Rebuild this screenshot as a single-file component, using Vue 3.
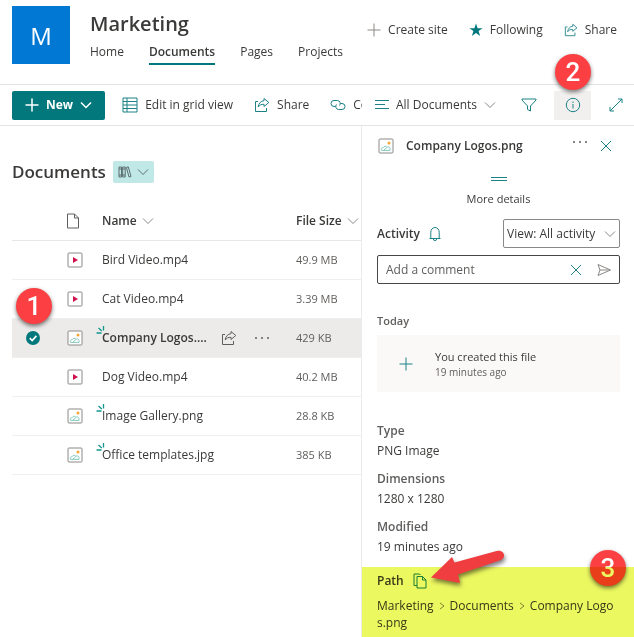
<script setup>
import { ref } from 'vue'

const nav = ['Home', 'Documents', 'Pages', 'Projects']
const files = [
  { name: 'Bird Video.mp4', kind: 'video', size: '49.9 MB' },
  { name: 'Cat Video.mp4', kind: 'video', size: '3.39 MB' },
  { name: 'Company Logos.png', short: 'Company Logos....', kind: 'picture', size: '429 KB', fresh: true, selected: true },
  { name: 'Dog Video.mp4', kind: 'video', size: '40.2 MB' },
  { name: 'Image Gallery.png', kind: 'picture', size: '28.8 KB', fresh: true },
  { name: 'Office templates.jpg', kind: 'picture', size: '385 KB', fresh: true },
]
const facts = [
  { label: 'Type', value: 'PNG Image' },
  { label: 'Dimensions', value: '1280 x 1280' },
  { label: 'Modified', value: '19 minutes ago' },
]
const comment = ref('')
</script>

<template>
  <div class="page">
    <svg class="defs" aria-hidden="true">
      <symbol id="share" viewBox="0 0 16 16">
        <path d="M4 4.500H1.500V14.500H12.500V11M10 1.500L14.800 5.500L10 9.500V7.300C7.200 7.200 5.600 8 4.200 10C4.600 6.400 6.800 4 10 3.700Z" />
      </symbol>
      <symbol id="chevron" viewBox="0 0 12 12"><path d="M1 3.5L6 8.5L11 3.5" /></symbol>
      <symbol id="plus" viewBox="0 0 14 14"><path d="M7 0.5V13.5M0.5 7H13.5" /></symbol>
      <symbol id="cross" viewBox="0 0 12 12"><path d="M1 1L11 11M11 1L1 11" /></symbol>
      <symbol id="picture" viewBox="0 0 16 16">
        <rect x="1" y="1" width="14" height="14" rx="1" fill="#fff" stroke="#8c8a88" />
        <circle cx="11" cy="5" r="1.500" fill="#f7a535" stroke="none" />
        <path d="M3.600 12.400C2.600 10.800 4 9.400 5.200 9.700C6 7.600 8.600 8 8.800 9.300C10 8.400 12 9 12 10.600V12.400ZM5.800 12.200L8.800 9.600" stroke="#79c4b8" fill="none" stroke-width="0.9" />
      </symbol>
      <symbol id="video" viewBox="0 0 16 16">
        <rect x="1" y="1" width="14" height="14" rx="1" fill="#fff" stroke="#8c8a88" />
        <path d="M6 5L11 8L6 11Z" fill="#d0124f" stroke="none" />
      </symbol>
    </svg>

    <header class="site">
      <div class="logo">M</div>
      <div class="identity">
        <h1>Marketing</h1>
        <nav>
          <a v-for="item in nav" :key="item" href="#" :class="{ current: item === 'Documents' }">{{ item }}</a>
        </nav>
      </div>
      <div class="site-actions">
        <button><svg class="i14 gray"><use href="#plus" /></svg>Create site</button>
        <button>
          <svg class="i14" viewBox="0 0 14 14"><path d="M7 0.5L8.6 5.2H13.6L9.6 8.1L11.1 12.9L7 10L2.9 12.9L4.4 8.1L0.4 5.2H5.4Z" fill="#03787c" stroke="none" /></svg>Following
        </button>
        <button><svg class="i14"><use href="#share" /></svg>Share</button>
      </div>
    </header>

    <div class="commands">
      <div class="cmd-left">
        <button class="new"><svg class="i14"><use href="#plus" /></svg>New<svg class="i12"><use href="#chevron" /></svg></button>
        <button>
          <svg class="i16" viewBox="0 0 16 16"><path d="M1 1H15V15H1ZM1 4.5H15M1 8H15M1 11.5H15M5 1V15" /></svg>Edit in grid view
        </button>
        <button><svg class="i16"><use href="#share" /></svg>Share</button>
        <button>
          <svg class="i16" viewBox="0 0 16 16"><path d="M5.500 9.500H4A3 3 0 0 1 4 3.500H7.500A3 3 0 0 1 9.500 8.500M10.500 6.500H12A3 3 0 0 1 12 12.500H8.500A3 3 0 0 1 6.500 7.500" /></svg>Copy link
        </button>
      </div>
      <div class="cmd-right">
        <button class="view">
          <svg class="i14" viewBox="0 0 14 14"><path d="M0 2.5H14M0 6.5H10M0 10.5H14" /></svg>All Documents<svg class="i12 gray"><use href="#chevron" /></svg>
        </button>
        <button class="square" aria-label="Filter">
          <svg class="i16" viewBox="0 0 16 16"><path d="M1 2H15V3L9.5 9V14L6.5 12.5V9L1 3Z" /></svg>
        </button>
        <button class="square active" aria-label="Details">
          <svg class="i16" viewBox="0 0 16 16"><circle cx="8" cy="8" r="6.700" /><path d="M8 7V11.5M8 4.5V6" /></svg>
          <span class="callout two">2</span>
        </button>
        <button class="square expand" aria-label="Expand">
          <svg class="i14" viewBox="0 0 14 14"><path d="M1 13L13 1M9 1H13V5M1 9V13H5" /></svg>
        </button>
      </div>
    </div>

    <div class="body">
      <main>
        <div class="heading">
          <h2>Documents</h2>
          <button class="library" aria-label="Library view">
            <svg class="i14" viewBox="0 0 14 14"><path d="M1 2H3.5V12H1ZM4.7 2H7.2V12H4.7ZM8.4 2.4L10.3 1.9L13 11.5L11 12ZM1 4H7M1 10H7" /></svg>
            <svg class="i12"><use href="#chevron" /></svg>
          </button>
        </div>
        <table>
          <colgroup><col class="c-check" /><col class="c-type" /><col /><col class="c-size" /></colgroup>
          <thead>
            <tr>
              <th></th>
              <th>
                <svg class="i16 dark" viewBox="0 0 16 16"><path d="M2.5 1H9.5L13.5 5V15H2.5ZM9.5 1V5H13.5" /></svg>
              </th>
              <th><span class="cell">Name<svg class="i12 gray"><use href="#chevron" /></svg></span></th>
              <th><span class="cell">File Size<svg class="i12 gray"><use href="#chevron" /></svg></span></th>
            </tr>
          </thead>
          <tbody>
            <tr v-for="file in files" :key="file.name" :class="{ selected: file.selected }">
              <td class="check">
                <template v-if="file.selected">
                  <svg class="i14" viewBox="0 0 14 14"><circle cx="7" cy="7" r="7" fill="#03787c" stroke="none" /><path d="M3.8 7.2L6.2 9.5L10.4 4.9" stroke="#fff" stroke-width="1.7" /></svg>
                  <span class="callout one">1</span>
                </template>
              </td>
              <td><svg class="i16"><use :href="'#' + file.kind" /></svg></td>
              <td>
                <span class="cell name">
                  <svg v-if="file.fresh" class="spark" viewBox="0 0 9 9"><path d="M0.500 8H5.500M2.500 3L5.800 6M7.500 1V5.500" /></svg>
                  <a href="#" :title="file.name">{{ file.short || file.name }}</a>
                  <span v-if="file.selected" class="row-tools">
                    <button aria-label="Share file"><svg class="i16 dark"><use href="#share" /></svg></button>
                    <button aria-label="More actions"><svg class="i16 dots" viewBox="0 0 16 16"><circle cx="2" cy="8" r="1" /><circle cx="8" cy="8" r="1" /><circle cx="14" cy="8" r="1" /></svg></button>
                  </span>
                </span>
              </td>
              <td class="size">{{ file.size }}</td>
            </tr>
          </tbody>
        </table>
      </main>

      <aside>
        <div class="file-head">
          <svg class="i16"><use href="#picture" /></svg>
          <h3>Company Logos.png</h3>
          <button aria-label="More"><svg class="i16 dots" viewBox="0 0 16 16"><circle cx="2" cy="4" r="1" /><circle cx="8" cy="4" r="1" /><circle cx="14" cy="4" r="1" /></svg></button>
          <button aria-label="Close"><svg class="i12"><use href="#cross" /></svg></button>
        </div>
        <button class="more">
          <svg class="handle" viewBox="0 0 16 6"><path d="M0 1.5H16M0 4.5H16" /></svg>
          More details
        </button>
        <div class="activity">
          <h4>Activity</h4>
          <svg class="i14" viewBox="0 0 14 14"><path d="M1.5 11.5H12.5M2.8 11.5V5.2A4.2 4.7 0 0 1 11.2 5.2V11.5M5.4 12A1.6 1.6 0 0 0 8.6 12" /></svg>
          <label class="select">
            <select aria-label="Activity view"><option>View: All activity</option></select>
            <svg class="i12 gray"><use href="#chevron" /></svg>
          </label>
        </div>
        <div class="comment">
          <input v-model="comment" aria-label="Comment" placeholder="Add a comment" />
          <button aria-label="Clear"><svg class="i12"><use href="#cross" /></svg></button>
          <button aria-label="Send"><svg class="i14 gray" viewBox="0 0 14 14"><path d="M1 1.500L13.500 7L1 12.500L3 7ZM3 7H13" /></svg></button>
        </div>
        <h5>Today</h5>
        <div class="event">
          <svg class="i14"><use href="#plus" /></svg>
          <div><p>You created this file</p><small>19 minutes ago</small></div>
        </div>
        <dl>
          <template v-for="fact in facts" :key="fact.label">
            <dt>{{ fact.label }}</dt>
            <dd>{{ fact.value }}</dd>
          </template>
        </dl>
        <section class="path">
          <div class="path-head">
            <h4>Path</h4>
            <button aria-label="Copy path">
              <svg class="i16" viewBox="0 0 16 16"><path d="M5 12.5H2V1H7.5L8.5 2M5 3.5H10.5L14 7V15H5ZM10.5 3.5V7H14" /></svg>
            </button>
          </div>
          <p class="crumbs">
            <a href="#">Marketing</a><svg viewBox="0 0 8 8"><path d="M2 1L6 4L2 7" /></svg><a href="#">Documents</a><svg viewBox="0 0 8 8"><path d="M2 1L6 4L2 7" /></svg><a href="#">Company Logos.png</a>
          </p>
          <span class="callout three">3</span>
          <svg class="arrow" viewBox="0 0 76 36"><path d="M2 27.500L23 7L25.500 12.500L68.500 0.800C75 -0.500 78 7.500 71.500 10.300L29 24.500L31 33Z" /></svg>
        </section>
      </aside>
    </div>
  </div>
</template>

<style>
body {
  margin: 0;
  background: #fff;
}
</style>

<style scoped>
* {
  box-sizing: border-box;
}
.page {
  font-family: "Open Sans", "Noto Sans", sans-serif;
  font-size: 12px;
  line-height: 16px;
  color: #3b3a39;
  background: #fff;
  overflow: hidden;
}
h1, h2, h3, h4, h5, p, dl, dd {
  margin: 0;
}
h3, h4, h5, dt {
  font-size: 12px;
  font-weight: 600;
}
a {
  color: inherit;
  text-decoration: none;
}
button {
  display: flex;
  align-items: center;
  gap: 7px;
  padding: 0;
  border: 0;
  background: none;
  font: inherit;
  color: inherit;
  white-space: nowrap;
  flex: none;
}
svg {
  flex: none;
  fill: none;
  stroke: #1d8286;
  stroke-width: 1;
}
.defs {
  position: absolute;
  width: 0;
  height: 0;
}
.i12 { width: 12px; height: 12px; }
.i14 { width: 14px; height: 14px; }
.i16 { width: 16px; height: 16px; }
.gray { stroke: #8a8886; }
.dark { stroke: #605e5c; }
.dots { fill: #605e5c; stroke: none; }

.site {
  display: flex;
  height: 84px;
  padding: 6px 17px 0 12px;
}
.logo {
  width: 58px;
  height: 58px;
  background: #0078d4;
  color: #fff;
  font-size: 24px;
  line-height: 60px;
  text-align: center;
}
.identity {
  margin-left: 20px;
}
h1 {
  font-size: 20px;
  font-weight: 600;
  line-height: 36px;
}
nav {
  display: flex;
  gap: 25px;
}
nav a {
  height: 23px;
  line-height: 20px;
}
nav .current {
  font-weight: 600;
  border-bottom: 2px solid #03787c;
}
.site-actions {
  display: flex;
  gap: 21px;
  height: 48px;
  margin-left: auto;
}

.commands {
  display: flex;
  height: 42px;
  border-top: 1px solid #e5e4e3;
  border-bottom: 1px solid #e5e4e3;
}
.cmd-left {
  display: flex;
  align-items: center;
  flex: 1;
  gap: 21px;
  min-width: 0;
  padding-left: 12px;
  overflow: hidden;
}
.new {
  height: 29px;
  margin-right: -4px;
  padding: 0 13px;
  border-radius: 2px;
  background: #03787c;
  color: #fff;
  font-weight: 700;
}
.new svg {
  stroke: #fff;
  stroke-width: 1.5;
}
.cmd-right {
  display: flex;
  align-items: center;
  width: 272px;
  padding-left: 13px;
}
.view {
  flex: 1;
}
.square {
  position: relative;
  justify-content: center;
  width: 43px;
  height: 29px;
}
.active {
  width: 37px;
  margin-left: 4px;
  background: #f1f0ef;
}
.expand {
  margin: 0 -3px 0 3px;
}

.body {
  display: flex;
}
main {
  flex: 1;
  min-width: 0;
  padding: 35px 0 0 12px;
}
.heading {
  display: flex;
  align-items: center;
  gap: 7px;
  height: 22px;
}
h2 {
  font-size: 17px;
  font-weight: 600;
  line-height: 22px;
}
.library {
  gap: 5px;
  height: 22px;
  padding: 0 5px;
  border-radius: 2px;
  background: #bfe8e7;
}
.library svg {
  stroke: #5c6f70;
}
table {
  width: 100%;
  margin-top: 19px;
  border-collapse: separate;
  border-spacing: 0;
  table-layout: fixed;
}
.c-check { width: 43px; }
.c-type { width: 47px; }
.c-size { width: 65px; }
th, td {
  height: 39px;
  padding: 0;
  border-bottom: 1px solid #f0efee;
  font-weight: 400;
  text-align: left;
  white-space: nowrap;
}
th {
  font-weight: 600;
  border-bottom-color: #e8e7e6;
}
td:nth-child(2) {
  padding-left: 12px;
}
th:nth-child(2) {
  padding-left: 10px;
}
th > svg, td > svg {
  display: block;
}
.cell {
  position: relative;
  display: flex;
  align-items: center;
  gap: 5px;
}
.check {
  position: relative;
}
.check > svg {
  margin-left: 14px;
}
.spark {
  position: absolute;
  left: -6px;
  top: -5px;
  width: 9px;
  height: 9px;
  stroke: #12958f;
  stroke-width: 1.3;
}
.row-tools {
  display: flex;
  gap: 17px;
  margin-left: auto;
  margin-right: 26px;
}
.selected td {
  background: #edebe9;
}
.selected .name {
  font-weight: 600;
}
.size {
  font-size: 11px;
  color: #605e5c;
}

aside {
  width: 273px;
  padding: 12px 14px 0 15px;
  border-left: 1px solid #edebe9;
}
.file-head {
  display: flex;
  align-items: center;
  gap: 12px;
  padding: 0 8px 0 1px;
}
.file-head h3 {
  flex: 1;
  white-space: nowrap;
}
.more {
  flex-direction: column;
  gap: 9px;
  width: 100%;
  margin-top: 22px;
  font-size: 11px;
}
.handle {
  width: 16px;
  height: 6px;
}
.activity {
  display: flex;
  align-items: center;
  gap: 8px;
  margin-top: 12px;
}
.select {
  position: relative;
  display: flex;
  align-items: center;
  width: 117px;
  margin-left: auto;
}
.select svg {
  position: absolute;
  right: 4px;
  pointer-events: none;
}
select {
  width: 100%;
  height: 29px;
  padding: 0 0 0 3px;
  border: 1px solid #8a8886;
  border-radius: 2px;
  appearance: none;
  background: #fff;
  color: inherit;
  font: inherit;
}
.comment {
  display: flex;
  align-items: center;
  gap: 15px;
  height: 29px;
  margin-top: 7px;
  padding: 0 8px;
  border: 1px solid #484644;
  border-radius: 2px;
}
input {
  flex: 1;
  min-width: 0;
  padding: 0;
  border: 0;
  outline: 0;
  background: none;
  font: inherit;
}
input::placeholder {
  color: #605e5c;
  opacity: 1;
}
h5 {
  margin-top: 29px;
  font-size: 11px;
  color: #605e5c;
}
.event {
  display: flex;
  align-items: center;
  gap: 22px;
  height: 57px;
  margin-top: 6px;
  padding-left: 22px;
  background: #faf9f8;
}
.event p {
  font-size: 11px;
}
.event small {
  display: block;
  font-size: 10px;
  line-height: 14px;
  color: #605e5c;
}
dl {
  margin-top: 29px;
}
dt {
  line-height: 20px;
  color: #605e5c;
}
dd {
  margin-bottom: 8px;
  line-height: 20px;
}
.path {
  position: relative;
  margin: 10px -14px 0 -15px;
  padding: 5px 14px 6px 15px;
}
/* Marker-pen highlight: tints everything in the block but the arrow. */
.path::after {
  content: "";
  position: absolute;
  inset: 0;
  background: #ecf860;
  mix-blend-mode: multiply;
  pointer-events: none;
}
.path-head {
  display: flex;
  align-items: center;
  gap: 8px;
  height: 18px;
}
.crumbs {
  margin-top: 7px;
  line-height: 17px;
  word-break: break-all;
}
.crumbs svg {
  width: 8px;
  height: 8px;
  margin: 0 4px;
  stroke: #8a8886;
}
.arrow {
  position: absolute;
  z-index: 1;
  left: 67px;
  top: -17px;
  width: 76px;
  height: 36px;
  overflow: visible;
  fill: #f03e40;
  stroke: none;
  filter: drop-shadow(1px 3px 2px rgba(0, 0, 0, 0.5));
}
.callout {
  position: absolute;
  width: 36px;
  height: 36px;
  border-radius: 50%;
  background: #fb3f42;
  color: #fff;
  font: 500 26px/37px Roboto, sans-serif;
  text-align: center;
  box-shadow: 0 2px 4px rgba(0, 0, 0, 0.55);
}
.one {
  left: 4px;
  top: -31px;
}
.two {
  left: 1px;
  top: -37px;
}
.three {
  right: 8px;
  top: -17px;
}
</style>
